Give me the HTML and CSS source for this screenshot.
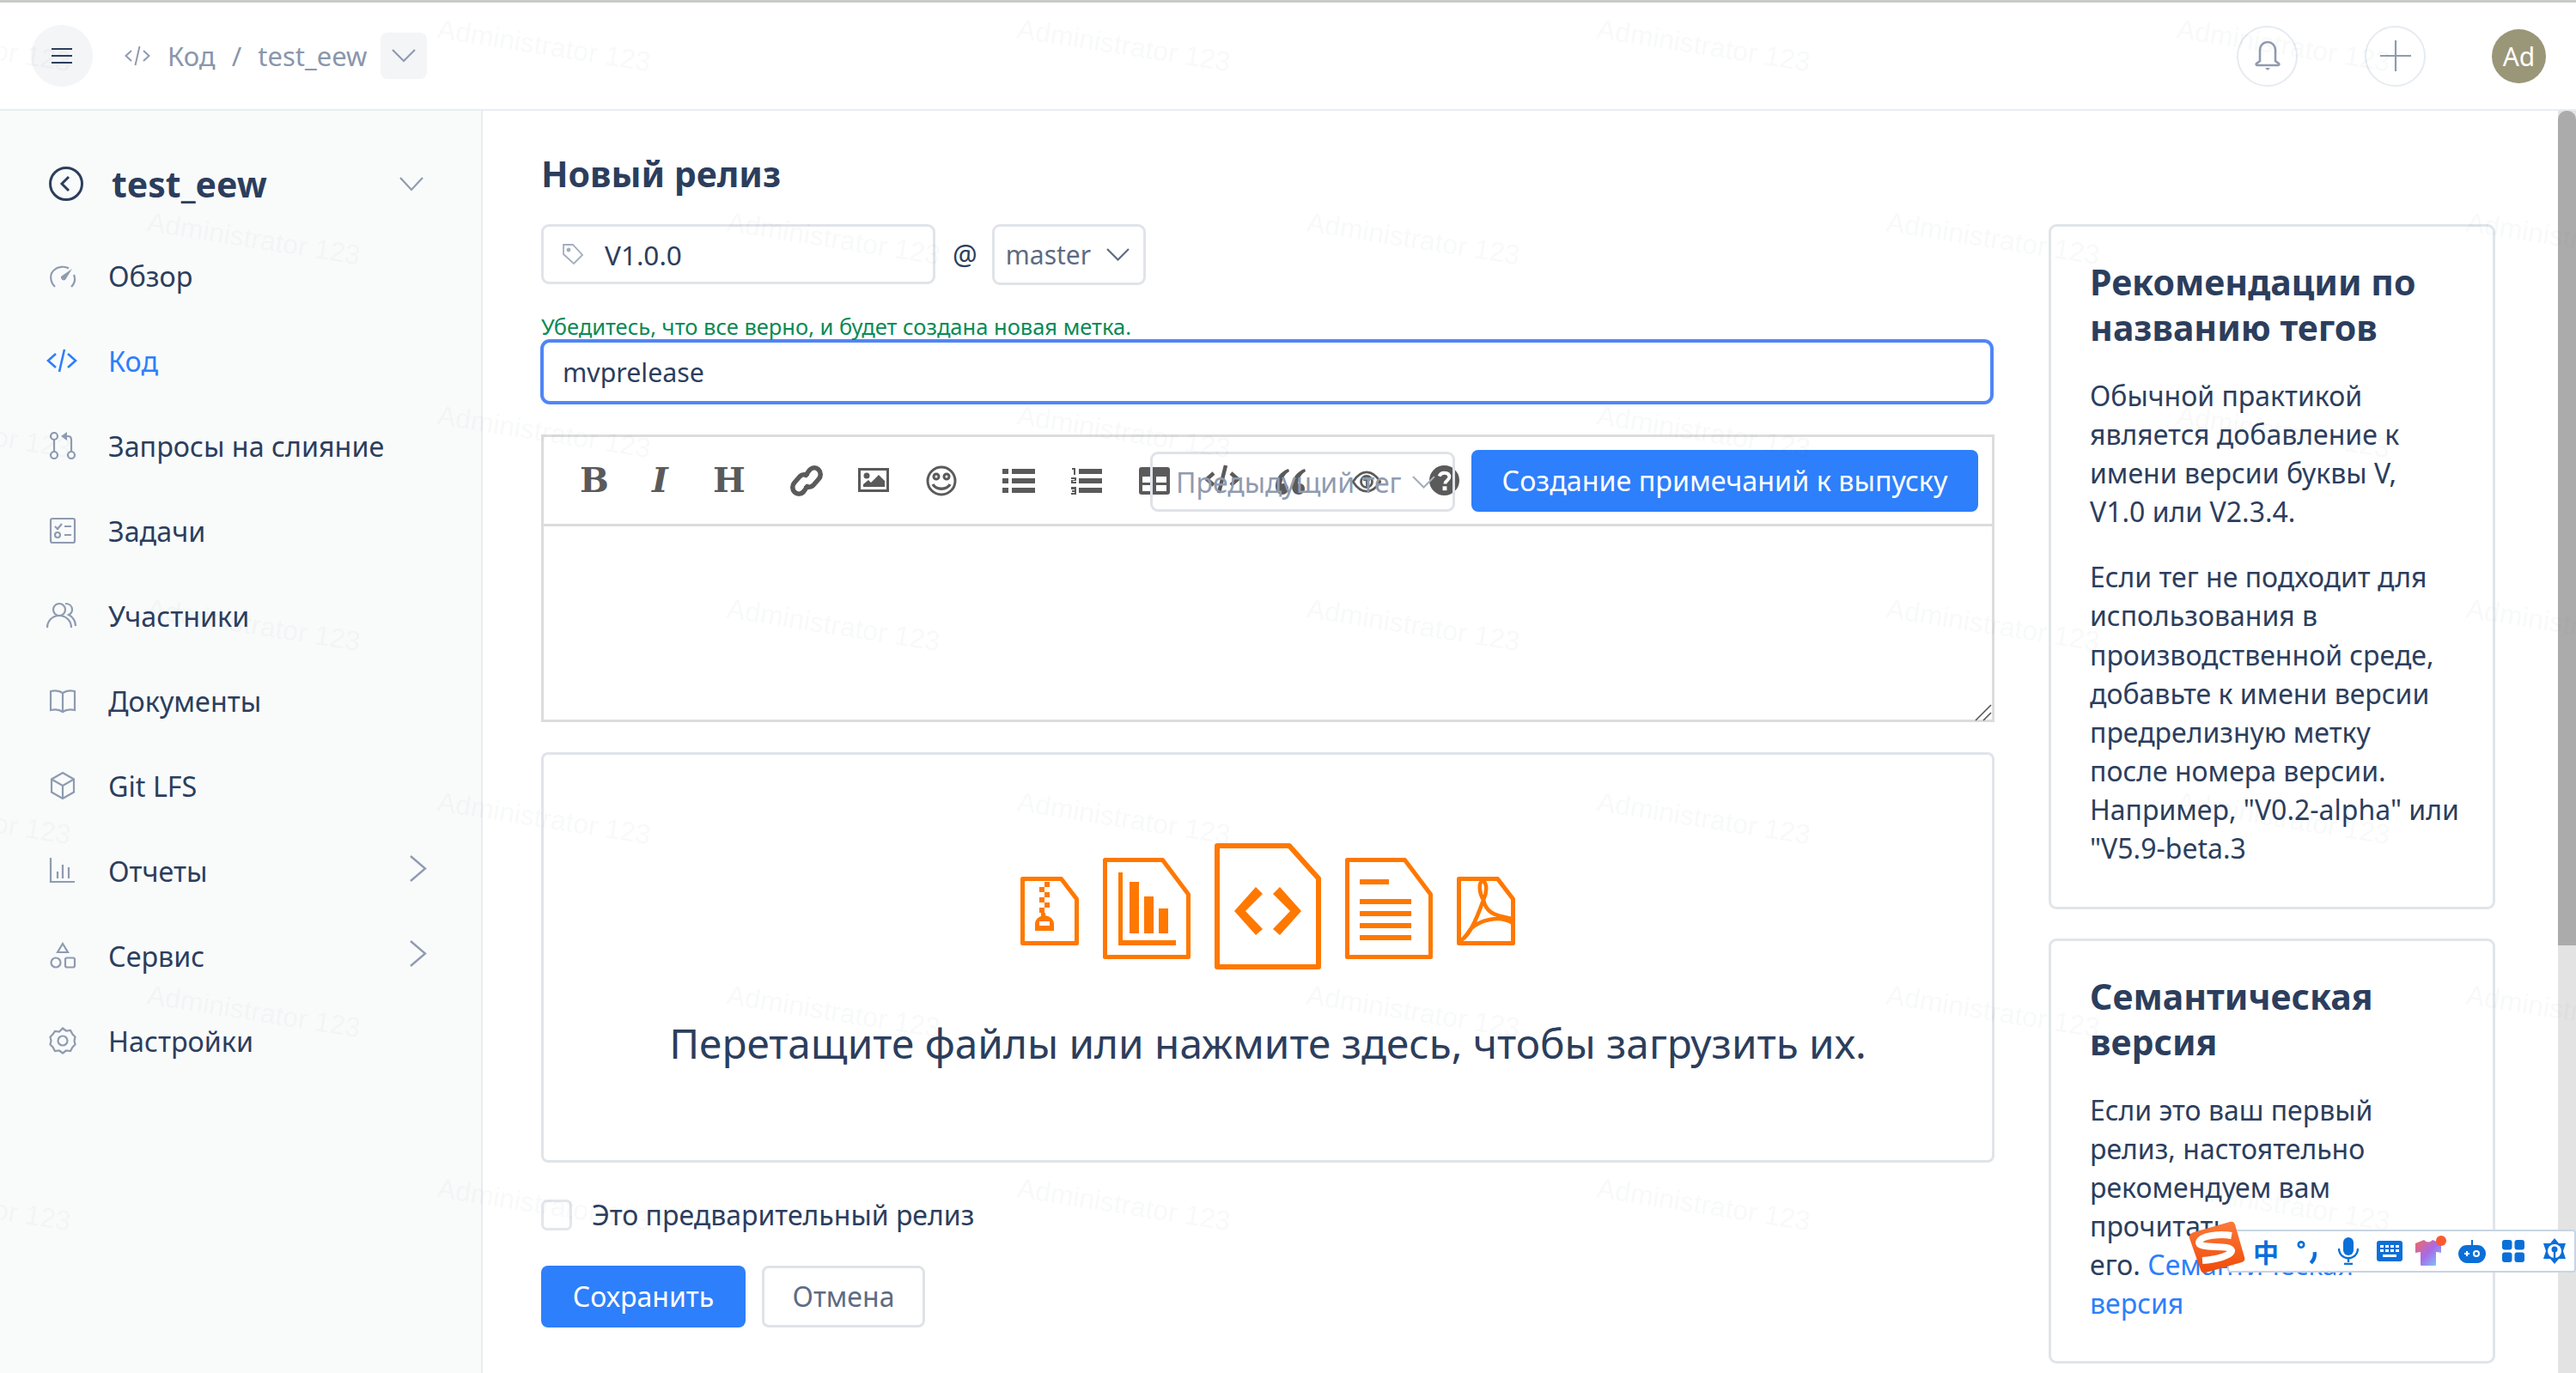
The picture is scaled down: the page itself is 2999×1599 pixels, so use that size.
FILE: index.html
```html
<!DOCTYPE html>
<html lang="ru">
<head>
    <meta charset="UTF-8">
    <title>Новый релиз</title>
    <link rel="stylesheet" href="styles.css">
</head>
<body>
    <header class="topbar">
        <button class="menu-btn">
            <svg width="26" height="20" viewBox="0 0 26 20"><path d="M1 2h24M1 10h24M1 18h24" stroke="#2c3e5d" stroke-width="2.2"/></svg>
        </button>
        <nav class="crumbs">
            <svg class="crumb-icon" width="30" height="26" viewBox="0 0 30 26" fill="none" stroke="#8f9bb0" stroke-width="2"><path d="M8 7 1.500 13 8 19M22 7l6.500 6-6.500 6M17.500 2l-5 22"/></svg>
            <span>Код</span>
            <span class="crumb-sep">/</span>
            <span>test_eew</span>
            <span class="crumb-drop">
                <svg width="28" height="16" viewBox="0 0 28 16" fill="none" stroke="#8f9bb0" stroke-width="2.200"><path d="m1 1 13 13L27 1"/></svg>
            </span>
        </nav>
        <div class="top-actions">
            <span class="round-btn">
                <svg width="32" height="36" viewBox="0 0 32 36" fill="none" stroke="#8f9bb0" stroke-width="2.600"><path d="M7 24V11a9 9 0 0 1 18 0v13l4 3c1 1 0 2-1 2H4c-1 0-2-1-1-2z"/><path d="M13 32h6l-3 3z" fill="#8f9bb0" stroke="none"/></svg>
            </span>
            <span class="round-btn">
                <svg width="36" height="36" viewBox="0 0 36 36" stroke="#8f9bb0" stroke-width="2.200"><path d="M18 0v36M0 18h36"/></svg>
            </span>
            <span class="avatar">Ad</span>
        </div>
    </header>

    <div class="layout">
        <aside class="sidebar">
            <div class="project">
                <svg class="project-back" width="40" height="40" viewBox="0 0 40 40" fill="none" stroke="#2c3e5d" stroke-width="3"><circle cx="20" cy="20" r="18.500"/><path d="m23 12-8 8 8 8"/></svg>
                <span class="project-name">test_eew</span>
                <svg class="project-drop" width="28" height="17" viewBox="0 0 28 17" fill="none" stroke="#8f9bb0" stroke-width="2.200"><path d="m1 1 13 14L27 1"/></svg>
            </div>
            <ul class="nav">
                <li class="nav-item">
                    <svg class="nav-icon" viewBox="0 0 32 32"><path d="M7 29C1 23 .5 14 6 9.500 10 5.500 18 4.500 23 7.500M29 15c2 5 1 10-3 14"/><path d="M27 8 19 21a3.500 3.500 0 0 1-5-4z" fill="#8f9bb0" stroke="none"/></svg>
                    <span>Обзор</span>
                </li>
                <li class="nav-item active">
                    <svg class="nav-icon nav-icon-wide" viewBox="0 0 36 32"><path d="M11 8 2 16l9 8M25 8l9 8-9 8M21 3l-6 26"/></svg>
                    <span>Код</span>
                </li>
                <li class="nav-item">
                    <svg class="nav-icon" viewBox="0 0 32 32"><circle cx="6" cy="5" r="4"/><circle cx="6" cy="27" r="4"/><circle cx="26" cy="27" r="4"/><path d="M6 9v14M26 23V9q0-4-4-4h-2"/><path d="M14 5l7-5v10z" fill="#8f9bb0" stroke="none"/></svg>
                    <span>Запросы на слияние</span>
                </li>
                <li class="nav-item">
                    <svg class="nav-icon" viewBox="0 0 32 32"><rect x="2" y="2" width="28" height="28" rx="2"/><path d="m7 11 3 3 5-6M18 11h8M18 21h8"/><circle cx="10" cy="21" r="3"/></svg>
                    <span>Задачи</span>
                </li>
                <li class="nav-item">
                    <svg class="nav-icon nav-icon-wide" viewBox="0 0 36 32"><circle cx="15" cy="9" r="7"/><path d="M1 30c0-8 6-14 14-14s14 6 14 14M22 2c5 0 8 3 8 7 0 3-2 5-4 6 5 2 8 8 8 13"/></svg>
                    <span>Участники</span>
                </li>
                <li class="nav-item">
                    <svg class="nav-icon" viewBox="0 0 32 32"><path d="M16 7C12 4 6 4 2 5v22c4-1 10-1 14 2 4-3 10-3 14-2V5c-4-1-10-1-14 2zM16 7v22"/></svg>
                    <span>Документы</span>
                </li>
                <li class="nav-item">
                    <svg class="nav-icon" viewBox="0 0 32 32"><path d="M16 1 29 8.500v15L16 31 3 23.500v-15zM3 8.500 16 16l13-7.500M16 16v15"/></svg>
                    <span>Git LFS</span>
                </li>
                <li class="nav-item">
                    <svg class="nav-icon" viewBox="0 0 32 32"><path d="M2 1v28h28M10 17v8M16 9v16M23 12v13"/></svg>
                    <span>Отчеты</span>
                    <svg class="nav-more" width="20" height="31" viewBox="0 0 20 31" fill="none" stroke="#8f9bb0" stroke-width="2.400"><path d="m1 1 17 14.500L1 30"/></svg>
                </li>
                <li class="nav-item">
                    <svg class="nav-icon" viewBox="0 0 32 32"><path d="M16 2l6 10H10z"/><circle cx="8" cy="24" r="5.500"/><rect x="19" y="18.500" width="11" height="11" rx="2"/></svg>
                    <span>Сервис</span>
                    <svg class="nav-more" width="20" height="31" viewBox="0 0 20 31" fill="none" stroke="#8f9bb0" stroke-width="2.400"><path d="m1 1 17 14.500L1 30"/></svg>
                </li>
                <li class="nav-item">
                    <svg class="nav-icon" viewBox="0 0 32 32"><path d="M16 1.500l4 3 5-.500 2.500 4.500 3 3-1 4.500 1 4.500-3 3L25 28l-5-.500-4 3-4-3-5 .500-2.500-4.500-3-3 1-4.500-1-4.500 3-3L7 5l5 .500z"/><circle cx="16" cy="16" r="5.500"/></svg>
                    <span>Настройки</span>
                </li>
            </ul>
        </aside>

        <main class="content">
            <section class="release-form">
                <h1 class="page-title">Новый релиз</h1>
                <div class="tag-row">
                    <div class="tag-input">
                        <svg width="26" height="26" viewBox="0 0 26 26" fill="none" stroke="#a3adbe" stroke-width="1.800"><path d="M2 2h11l11 12-10 10L2 13z"/><circle cx="8" cy="8" r="1.500" fill="#a3adbe"/></svg>
                        <span>V1.0.0</span>
                    </div>
                    <span class="tag-at">@</span>
                    <div class="branch-select">
                        <span>master</span>
                        <svg width="27" height="15" viewBox="0 0 27 15" fill="none" stroke="#5e6b82" stroke-width="2.200"><path d="m1 1 12.500 12.500L26 1"/></svg>
                    </div>
                </div>
                <p class="tag-hint">Убедитесь, что все верно, и будет создана новая метка.</p>
                <div class="title-input">mvprelease</div>

                <div class="editor">
                    <div class="toolbar">
                        <span class="tool tool-b">B</span>
                        <span class="tool tool-i">I</span>
                        <span class="tool tool-h">H</span>
                        <svg class="tool-svg t-link" viewBox="0 0 38 38" fill="none" stroke="#5a5a5a" stroke-width="5.500"><path d="M17 14l5-7c3-4 8-4 11-1s3 8 0 11l-6 7c-3 3-7 3-9 0"/><path d="M21 24l-5 7c-3 4-8 4-11 1s-3-8 0-11l6-7c3-3 7-3 9 0"/></svg>
                        <svg class="tool-svg t-img" viewBox="0 0 36 32"><path d="M0 2h36v28H0zm3 3v22h30V5z" fill="#5a5a5a" fill-rule="evenodd"/><circle cx="10" cy="11" r="3.500" fill="#5a5a5a"/><path d="M6 24v-3l6-5 3 3 9-9 7 7v7z" fill="#5a5a5a"/></svg>
                        <svg class="tool-svg t-smile" viewBox="0 0 36 36" fill="none" stroke="#5a5a5a" stroke-width="3"><circle cx="18" cy="18" r="16"/><circle cx="12" cy="13" r="3"/><circle cx="24" cy="13" r="3"/><path d="M8 22c4 7 16 7 20 0" stroke-width="3.500"/></svg>
                        <svg class="tool-svg t-ul" viewBox="0 0 38 32" fill="#5a5a5a"><path d="M0 2h7v6H0zM0 13h7v6H0zM0 24h7v6H0zM11 2h27v6H11zM11 13h27v6H11zM11 24h27v6H11z"/></svg>
                        <svg class="tool-svg t-ol" viewBox="0 0 36 32" fill="#5a5a5a"><path d="M9 2h27v6H9zM9 13h27v6H9zM9 24h27v6H9zM1 1h4v8H3V3H1zM0 12h6v4H2v1h4v2H0v-4h4v-1H0zM0 23h6v9H0v-2h4v-1H1v-2h3v-1H0z"/></svg>
                        <svg class="tool-svg t-table" viewBox="0 0 36 32"><path d="M3 0h30a3 3 0 0 1 3 3v26a3 3 0 0 1-3 3H3a3 3 0 0 1-3-3V3a3 3 0 0 1 3-3zm1 11v7h12v-7zm16 0v7h12v-7zM4 21v7h12v-7zm16 0v7h12v-7z" fill="#5a5a5a" fill-rule="evenodd"/></svg>
                        <svg class="tool-svg t-code" viewBox="0 0 40 34" fill="none" stroke="#5a5a5a" stroke-width="4.500"><path d="M10 10 2 17l8 7M30 10l8 7-8 7M24 1l-8 32"/></svg>
                        <svg class="tool-svg t-quote" viewBox="0 0 38 34" fill="#5a5a5a"><path d="M17 2C8 5 2 13 2 22c0 6 3 10 8 10 4 0 7-3 7-7s-3-6-6-6l-2 .5C10 13 13 8 18 5zM36 2c-9 3-15 11-15 20 0 6 3 10 8 10 4 0 7-3 7-7s-3-6-6-6l-2 .5C29 13 32 8 37 5z"/></svg>
                        <svg class="tool-svg t-eye" viewBox="0 0 36 30" fill="none" stroke="#5a5a5a" stroke-width="3"><path d="M1 15C6 7 12 3 18 3s12 4 17 12c-5 8-11 12-17 12S6 23 1 15z"/><circle cx="18" cy="15" r="7"/><path d="M14 13h8M18 13v8" stroke-width="2"/></svg>
                        <svg class="tool-svg t-help" viewBox="0 0 36 36"><circle cx="18" cy="18" r="18" fill="#5a5a5a"/><path d="M12 13c1-3 3-4 6-4 4 0 6 2 6 5 0 4-5 4-5 8" fill="none" stroke="#fff" stroke-width="4"/><rect x="16" y="25" width="5" height="5" fill="#fff"/></svg>
                        <div class="prev-tag">
                            <span>Предыдущий тег</span>
                            <svg width="27" height="15" viewBox="0 0 27 15" fill="none" stroke="#a3adbe" stroke-width="2"><path d="m1 1 12.500 12.500L26 1"/></svg>
                        </div>
                        <button class="btn btn-primary btn-notes">Создание примечаний к выпуску</button>
                    </div>
                    <div class="editor-body">
                        <svg class="resize-grip" width="20" height="20" viewBox="0 0 20 20" stroke="#555" stroke-width="1.600"><path d="M1 19 19 1M10 19l9-9"/></svg>
                    </div>
                </div>

                <div class="upload">
                    <svg class="upload-icons" width="576" height="147" viewBox="1188 982 576 147">
                        <g fill="none" stroke="#ff7800" stroke-width="5" stroke-linejoin="round">
                            <path d="M1190.500 1023.500h45l18 23.500v51.500h-63z"/>
                            <path d="M1286.500 1001.500h67l30 40v73h-97z"/>
                            <path d="M1417 985h84l34 38v103h-118z" stroke-width="6"/>
                            <path d="M1568.500 1001.500h67l30 40v73h-97z"/>
                            <path d="M1698.500 1023.500h45l18 23.500v51.500h-63z"/>
                            <path d="M1701 1095c11-5 21-33 26-47-5-8-6-20-1-22 6 2 5 14 1 22 3 14 11 18 33 22M1761 1075c-16-10-39-3-49 7-4 6-9 12-11 13" stroke-width="4.500"/>
                        </g>
                        <g fill="#ff7800">
                            <path d="M1216 1027h6v6h-6zM1210 1033h6v6h-6zM1216 1039h6v6h-6zM1210 1045h6v6h-6zM1216 1051h6v6h-6zM1210 1057h6v6h-6zM1212 1063h5v5h-5z"/>
                            <path d="M1205 1084v-8c0-5 4-9 11-10 7 1 11 5 11 10v8zM1210 1073v5h12v-5z" fill-rule="evenodd"/>
                            <path d="M1302 1016h5v79h62v6h-67zM1315 1027h11v60h-11zM1332 1044h11v43h-11zM1349 1058h11v29h-11z"/>
                            <path d="M1462 1033l8 8-20 20 20 21-8 7-25-28zM1490 1033l-8 8 20 20-20 21 8 7 25-28z"/>
                            <path d="M1583 1024h34v6h-34zM1583 1047h60v6h-60zM1583 1061h60v6h-60zM1583 1075h60v6h-60zM1583 1089h60v6h-60z"/>
                        </g>
                    </svg>
                    <p class="upload-text">Перетащите файлы или нажмите здесь, чтобы загрузить их.</p>
                </div>

                <label class="prerelease">
                    <span class="checkbox"></span>
                    <span>Это предварительный релиз</span>
                </label>

                <div class="form-actions">
                    <button class="btn btn-primary btn-save">Сохранить</button>
                    <button class="btn btn-cancel">Отмена</button>
                </div>
            </section>

            <aside class="help">
                <div class="help-card">
                    <h3>Рекомендации по названию тегов</h3>
                    <p>Обычной практикой является добавление к имени версии буквы V,<br>V1.0 или V2.3.4.</p>
                    <p>Если тег не подходит для использования в производственной среде, добавьте к имени версии предрелизную метку<br>после номера версии. Например, "V0.2-alpha" или "V5.9-beta.3</p>
                </div>
                <div class="help-card help-card-short">
                    <h3>Семантическая версия</h3>
                    <p>Если это ваш первый<br>релиз, настоятельно<br>рекомендуем вам<br>прочитать<br>его. <a href="#">Семантическая<br>версия</a></p>
                </div>
            </aside>
        </main>
    </div>

    <!-- overlays -->
    <div class="scrollbar"><div class="scrollbar-thumb"></div></div>

    <svg class="watermark" width="2999" height="1599">
        <defs>
            <pattern id="wm" width="675" height="450" patternUnits="userSpaceOnUse">
                <text x="508" y="44" transform="rotate(9 508 44)">Administrator 123</text>
                <text x="-167" y="44" transform="rotate(9 -167 44)">Administrator 123</text>
                <text x="170" y="269" transform="rotate(9 170 269)">Administrator 123</text>
            </pattern>
        </defs>
        <rect width="2999" height="1599" fill="url(#wm)"/>
    </svg>

    <div class="ime">
        <svg class="ime-logo" width="66" height="62" viewBox="0 0 66 62">
            <defs><linearGradient id="imeg" x1="0" y1="0" x2="0" y2="1"><stop offset="0" stop-color="#fb7a3a"/><stop offset="1" stop-color="#f04a08"/></linearGradient></defs>
            <path d="M6 13 48 1c3-1 5 0 6 3l11 38c1 3 0 5-3 6L20 60c-3 1-5 0-6-3L1 20c-1-3 2-6 5-7z" fill="url(#imeg)"/>
            <path d="M50 17C38 15 14 16 12 25c-1 8 36 2 38 9 1 6-18 11-34 12" fill="none" stroke="#fff" stroke-width="8"/>
        </svg>
        <div class="ime-bar">
            <span class="ime-zh">中</span>
            <svg width="24" height="30" viewBox="0 0 22 28" fill="none" stroke="#0b6fd8"><circle cx="4.500" cy="7" r="3" stroke-width="2.500"/><path d="M19 15c1 5-1 9-4 12" stroke-width="4"/></svg>
            <svg width="24" height="32" viewBox="0 0 24 32"><rect x="6" y="0" width="12" height="21" rx="6" fill="#0b6fd8"/><path d="M1 13c0 15 22 15 22 0M12 25v4M7 31h10" fill="none" stroke="#0b6fd8" stroke-width="2.400"/></svg>
            <svg width="30" height="24" viewBox="0 0 30 24"><rect width="30" height="24" rx="3" fill="#0b6fd8"/><path d="M4 5h4v3H4zM10 5h4v3h-4zM16 5h4v3h-4zM22 5h4v3h-4zM4 10h4v3H4zM10 10h4v3h-4zM16 10h4v3h-4zM22 10h4v3h-4zM7 16h16v3H7z" fill="#fff"/></svg>
            <svg width="38" height="36" viewBox="0 0 38 36">
                <defs><linearGradient id="imes" x1="0" y1="0" x2="1" y2="1"><stop offset="0" stop-color="#f2685a"/><stop offset=".5" stop-color="#a86ae8"/><stop offset="1" stop-color="#70d8fa"/></linearGradient></defs>
                <path d="M1 9 11 5q5 5 10 0l10 4v11l-6-1v15q0 1-1 1H8q-1 0-1-1V19l-6 1z" fill="url(#imes)"/>
                <circle cx="31" cy="6" r="6" fill="#fa5a32"/>
            </svg>
            <svg width="32" height="27" viewBox="0 0 32 27"><path d="M10 6h12c6 0 10 5 10 10s-4 11-10 11H10C4 27 0 21 0 16S4 6 10 6z" fill="#0b6fd8"/><path d="M16 0v6" stroke="#0b6fd8" stroke-width="2"/><path d="M7 16h6M10 13v6" stroke="#fff" stroke-width="2"/><circle cx="21" cy="16" r="3" fill="none" stroke="#fff" stroke-width="2"/></svg>
            <svg width="26" height="26" viewBox="0 0 26 26" fill="#0b6fd8"><rect width="11.500" height="11.500" rx="3"/><rect x="14.500" width="11.500" height="11.500" rx="3"/><rect y="14.500" width="11.500" height="11.500" rx="3"/><rect x="14.500" y="14.500" width="11.500" height="11.500" rx="3"/></svg>
            <svg width="28" height="30" viewBox="0 0 28 30"><path d="M14 0l5 6h8l-3 9 3 9h-8l-5 6-5-6H1l3-9-3-9h8z" fill="#0b6fd8"/><circle cx="14" cy="15" r="8" fill="#fff"/><circle cx="14" cy="13" r="3.500" fill="#0b6fd8"/><path d="M14 13v11" stroke="#0b6fd8" stroke-width="2.400"/></svg>
        </div>
    </div>
</body>
</html>
```

FILE: styles.css
```css
* {
  box-sizing: border-box;
}

html, body {
  height: 1599px;
  margin: 0;
  overflow: hidden;
}

body {
  background: #fff;
  color: #2c3e5d;
  font-family: "Noto Sans", "Open Sans", sans-serif;
  font-size: 32px;
}

/* header */
.topbar {
  display: flex;
  align-items: center;
  height: 129px;
  padding: 0 35px 0 36px;
  border-top: 3px solid #c9cbc9;
  border-bottom: 2px solid #e8edf1;
}

.menu-btn {
  display: flex;
  align-items: center;
  justify-content: center;
  width: 72px;
  height: 72px;
  border: none;
  border-radius: 50%;
  background: #f3f5f7;
}

.crumbs {
  display: flex;
  align-items: center;
  margin-left: 37px;
  color: #8a96ab;
  font-size: 31px;
}

.crumb-icon {
  margin-right: 20px;
}

.crumb-sep {
  margin: 0 19px;
}

.crumb-drop {
  display: flex;
  align-items: center;
  justify-content: center;
  width: 54px;
  height: 54px;
  margin-left: 16px;
  border-radius: 8px;
  background: #f3f5f7;
}

.top-actions {
  display: flex;
  align-items: center;
  margin-left: auto;
}

.round-btn {
  display: flex;
  align-items: center;
  justify-content: center;
  width: 71px;
  height: 71px;
  margin-right: 78px;
  border: 2px solid #e6ebf0;
  border-radius: 50%;
}

.round-btn + .round-btn {
  margin-right: 77px;
}

.avatar {
  display: flex;
  align-items: center;
  justify-content: center;
  width: 63px;
  height: 63px;
  border-radius: 50%;
  background: #9a9678;
  color: #fff;
  font-size: 30px;
}

/* sidebar */
.layout {
  display: flex;
  height: 1470px;
}

.sidebar {
  flex: none;
  width: 562px;
  padding: 36px 0 0 57px;
  background: #f9fbfb;
  border-right: 2px solid #e8edf1;
}

.project {
  display: flex;
  align-items: center;
  height: 98px;
  margin-bottom: 8px;
}

.project-name {
  margin-left: 33px;
  font-size: 41px;
  font-weight: 700;
}

.project-drop {
  margin-left: auto;
  margin-right: 67px;
}

.nav {
  margin: 0;
  padding: 0;
  list-style: none;
}

.nav-item {
  display: flex;
  align-items: center;
  height: 99px;
  padding-right: 63px;
  font-size: 32.300px;
}

.nav-item.active {
  color: #2e7ffb;
}

.nav-icon {
  flex: none;
  width: 32px;
  height: 32px;
  margin-right: 37px;
  fill: none;
  stroke: #8f9bb0;
  stroke-width: 2.2;
}

.nav-icon-wide {
  width: 36px;
  margin-left: -3px;
  margin-right: 36px;
}

.active .nav-icon {
  stroke: #2e7ffb;
  stroke-width: 2.6;
}

.nav-more {
  margin-left: auto;
  margin-top: -4px;
}

/* form */
.content {
  display: flex;
  flex: 1;
  padding-left: 68px;
}

.release-form {
  flex: none;
  width: 1692px;
}

.page-title {
  height: 52px;
  margin: 47px 0 33px;
  font-size: 41px;
  font-weight: 700;
  line-height: 52px;
}

.tag-row {
  display: flex;
  align-items: center;
  height: 70px;
}

.tag-input {
  display: flex;
  align-items: center;
  width: 459px;
  height: 70px;
  padding-left: 21px;
  border: 3px solid #e0e4e9;
  border-radius: 9px;
}

.tag-input span {
  margin-left: 24px;
  font-size: 31.500px;
}

.tag-at {
  margin: 0 17px 0 20px;
}

.branch-select {
  display: flex;
  align-items: center;
  justify-content: space-between;
  width: 179px;
  height: 71px;
  padding: 0 16px 0 13px;
  border: 3px solid #e0e4e9;
  border-radius: 9px;
  color: #5e6b82;
  font-size: 30px;
}

.tag-hint {
  height: 30px;
  margin: 34px 0 0;
  color: #0a8a55;
  font-size: 25.500px;
  line-height: 30px;
}

.title-input {
  display: flex;
  align-items: center;
  width: 1692px;
  height: 76px;
  padding-left: 22px;
  margin-left: -1px;
  border: 4px solid #4f86f7;
  border-radius: 11px;
  font-size: 30.300px;
}

.editor {
  height: 335px;
  margin-top: 35px;
  border: 3px solid #dcdcdc;
}

.toolbar {
  position: relative;
  height: 104px;
  border-bottom: 3px solid #dcdcdc;
}

.tool {
  position: absolute;
  top: 20px;
  color: #5a5a5a;
  font-family: "DejaVu Serif", serif;
  font-size: 40px;
  font-weight: 700;
  line-height: 60px;
}

.tool-b { left: 42px; }
.tool-i { left: 126px; font-style: italic; }
.tool-h { left: 197px; }

.tool-svg {
  position: absolute;
}

.t-link { left: 287px; top: 32px; width: 38px; height: 38px; }
.t-img { left: 366px; top: 34px; width: 36px; height: 32px; }
.t-smile { left: 445px; top: 33px; width: 36px; height: 36px; }
.t-ul { left: 534px; top: 35px; width: 38px; height: 32px; }
.t-ol { left: 614px; top: 35px; width: 36px; height: 32px; }
.t-table { left: 693px; top: 35px; width: 36px; height: 32px; }
.t-code { left: 770px; top: 32px; width: 40px; height: 34px; }
.t-quote { left: 850px; top: 35px; width: 38px; height: 34px; }
.t-eye { left: 941px; top: 38px; width: 34px; height: 28px; }
.t-help { left: 1031px; top: 33px; width: 35px; height: 35px; }

.prev-tag {
  position: absolute;
  left: 706px;
  top: 17px;
  display: flex;
  align-items: center;
  justify-content: space-between;
  width: 355px;
  height: 70px;
  padding: 0 20px 0 27px;
  border: 3px solid #dfe3e8;
  border-radius: 9px;
  color: #8f9bb0;
}

.prev-tag span {
  white-space: nowrap;
}

.btn {
  height: 72px;
  padding: 0 0 2px;
  border-radius: 8px;
  font-family: inherit;
  font-size: 32px;
}

.btn-primary {
  border: none;
  background: #2e7ffb;
  color: #fff;
}

.btn-notes {
  position: absolute;
  right: 16px;
  top: 15px;
  width: 590px;
  font-size: 32.300px;
}

.editor-body {
  position: relative;
  height: 228px;
}

.resize-grip {
  position: absolute;
  right: 0;
  bottom: 1px;
}

/* upload */
.upload {
  display: flex;
  flex-direction: column;
  align-items: center;
  height: 478px;
  margin-top: 35px;
  padding-top: 103px;
  border: 3px solid #e0e4e9;
  border-radius: 8px;
}

.upload-text {
  margin: 53px 0 0;
  font-size: 47.700px;
  line-height: 66px;
}

.prerelease {
  display: flex;
  align-items: center;
  height: 36px;
  margin-top: 43px;
}

.prerelease span:last-child {
  margin-top: -2px;
}

.checkbox {
  width: 36px;
  height: 36px;
  margin-right: 23px;
  border: 3px solid #e3e6ea;
  border-radius: 7px;
}

.form-actions {
  display: flex;
  gap: 19px;
  margin-top: 41px;
}

.btn-save {
  width: 238px;
}

.btn-cancel {
  width: 190px;
  border: 3px solid #dfe3e8;
  background: #fff;
  color: #5e6b82;
}

/* right column */
.help {
  flex: none;
  width: 520px;
  margin-left: 63px;
  padding-top: 132px;
}

.help-card {
  height: 798px;
  padding: 38px 30px 0 45px;
  border: 3px solid #e0e5ea;
  border-radius: 9px;
}

.help-card-short {
  height: 495px;
  margin-top: 34px;
}

.help-card h3 {
  margin: 0 0 30px;
  font-size: 41px;
  font-weight: 700;
  line-height: 53px;
}

.help-card p {
  margin: 0 0 31px;
  line-height: 45.100px;
}

.help-card a {
  color: #2e7ffb;
  text-decoration: none;
}

/* overlays */
.scrollbar {
  position: fixed;
  top: 129px;
  right: 0;
  width: 21px;
  height: 1470px;
  background: #e3e3e3;
}

.scrollbar-thumb {
  height: 972px;
  border-radius: 10px 10px 0 0;
  background: #ababab;
}

.watermark {
  position: fixed;
  top: 0;
  left: 0;
  pointer-events: none;
}

.watermark text {
  fill: rgba(40, 50, 70, 0.032);
  font-family: "Liberation Sans", sans-serif;
  font-size: 32px;
}

.ime {
  position: fixed;
  left: 2548px;
  top: 1422px;
  width: 451px;
  height: 62px;
}

.ime-logo {
  position: absolute;
  left: 0;
  top: 0;
  z-index: 1;
}

.ime-bar {
  position: absolute;
  left: 45px;
  top: 10px;
  right: 0;
  display: grid;
  grid-template-columns: repeat(8, 48px);
  justify-items: center;
  align-items: center;
  height: 50px;
  padding-left: 19px;
  border: 2px solid #c8d4e4;
  border-radius: 4px;
  background: #fff;
}

.ime-zh {
  color: #0b6fd8;
  font-family: "Noto Sans CJK SC", sans-serif;
  font-size: 30px;
  font-weight: 700;
  line-height: 1;
}
```
